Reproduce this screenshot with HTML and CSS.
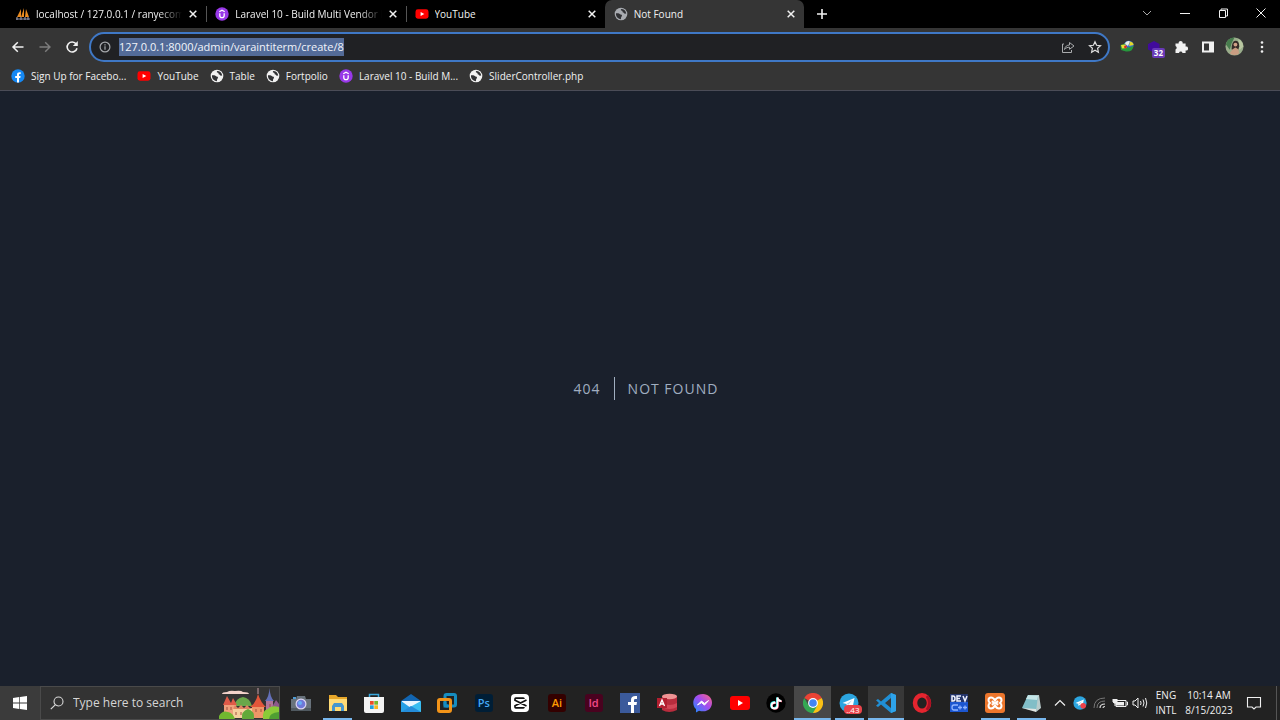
FILE: index.html
```html
<!DOCTYPE html>
<html lang="en">
<head>
<meta charset="utf-8">
<meta name="viewport" content="width=device-width, initial-scale=1">
<title>Not Found</title>
<link rel="stylesheet" href="styles.css">
</head>
<body>
<svg class="sprite" aria-hidden="true">
  <symbol id="close" viewBox="0 0 10 10"><path d="M1.7 1.7l6.6 6.6M8.300 1.7L1.700 8.300" fill="none" stroke="currentColor" stroke-width="1.5"/></symbol>
  <symbol id="globe" viewBox="0 0 14 14"><circle cx="7" cy="7" r="6.300" fill="currentColor"/><path d="M2 6.300c1.500-.2 3.200-.3 3.800.8.500 1 1.900.2 2.200 1.300.2.900-.9 1-.9 2l-.2 1.800C3.800 12 1.700 9.500 2 6.300zM7.200 2c-.9 1.200-.2 1.700.8 1.700.8.1.2 1.600 1.200 1.700 1.100 0 .8 1.200 1.500 1.400l1.500-.2C12 4 10 2 7.200 2z" fill="#303134"/></symbol>
  <symbol id="yt" viewBox="0 0 14 14"><rect x=".5" y="2.300" width="13" height="9.400" rx="2.400" fill="#f00"/><path d="M5.600 5l3.700 2-3.700 2z" fill="#fff"/></symbol>
  <symbol id="udemy" viewBox="0 0 14 14"><circle cx="7" cy="7" r="6.700" fill="#9838e8"/><path d="M4.800 6.200v2.300c0 2.900 4.400 2.900 4.400 0V6.200M4.300 4.700L7 3.200l2.700 1.500" fill="none" stroke="#fff" stroke-width="1.300"/></symbol>
  <symbol id="plane" viewBox="0 0 20 20"><circle cx="10" cy="10" r="9.500" fill="#2ca5df"/><path d="M3.500 10l12-5-2 10-3.600-2.600-2 2-.4-3.300z" fill="#fff"/><path d="M7.500 11.100l5.500-3.800-3.500 4.500" fill="#a9d5ed"/></symbol>
</svg>

<header class="browser">
  <div class="tabstrip">
    <div class="tabs">
      <div class="tab"><svg class="fav" viewBox="0 0 14 14"><path d="M1 10L5 2v8zM5 10l3-9v9zM9 10l1-8 3 8z" fill="#e98b20"/><path d="M0 12h14M1 10v3M5 10v3M9 10v3M12 10v3" stroke="#8d8fa5" stroke-width="1.200"/></svg><span class="tab-title fade">localhost / 127.0.0.1 / ranyecome</span><button class="close" aria-label="Close tab"><svg><use href="#close"/></svg></button></div>
      <div class="tab divided"><svg class="fav"><use href="#udemy"/></svg><span class="tab-title fade">Laravel 10 - Build Multi Vendor E</span><button class="close" aria-label="Close tab"><svg><use href="#close"/></svg></button></div>
      <div class="tab divided"><svg class="fav"><use href="#yt"/></svg><span class="tab-title">YouTube</span><button class="close" aria-label="Close tab"><svg><use href="#close"/></svg></button></div>
      <div class="tab active"><svg class="fav dim"><use href="#globe"/></svg><span class="tab-title">Not Found</span><button class="close" aria-label="Close tab"><svg><use href="#close"/></svg></button></div>
    </div>
    <button class="new-tab" aria-label="New tab"><svg viewBox="0 0 12 12"><path d="M6 1v10M1 6h10" stroke="currentColor" stroke-width="1.600"/></svg></button>
    <div class="window-controls">
      <button aria-label="Search tabs" class="faint"><svg viewBox="0 0 12 12"><path d="M2 4l4 4 4-4" fill="none" stroke="currentColor"/></svg></button>
      <button aria-label="Minimize"><svg viewBox="0 0 12 12"><path d="M1 6.500h10" stroke="currentColor"/></svg></button>
      <button aria-label="Restore"><svg viewBox="0 0 12 12"><path d="M2.500 3.500h6v7h-6zM4 3.500v-1.500h6.500v7h-2" fill="none" stroke="currentColor"/></svg></button>
      <button aria-label="Close window"><svg viewBox="0 0 12 12"><path d="M1.500 1.500l9 9M10.500 1.500l-9 9" stroke="currentColor"/></svg></button>
    </div>
  </div>

  <div class="toolbar">
    <nav class="nav">
      <button aria-label="Back"><svg viewBox="0 0 14 14"><path d="M12.500 7H2M6.800 2.200L2 7l4.800 4.800" fill="none" stroke="currentColor" stroke-width="1.500"/></svg></button>
      <button aria-label="Forward" class="disabled"><svg viewBox="0 0 14 14"><path d="M1.500 7H12M7.200 2.200L12 7l-4.800 4.800" fill="none" stroke="currentColor" stroke-width="1.400"/></svg></button>
      <button aria-label="Reload"><svg viewBox="0 0 14 14"><path d="M11.200 4A5 5 0 1 0 12 8.200" fill="none" stroke="currentColor" stroke-width="1.600"/><path d="M12.800 1v5H7.800z" fill="currentColor"/></svg></button>
    </nav>
    <div class="omnibox">
      <svg class="info" viewBox="0 0 12 12"><circle cx="6" cy="6" r="4.900" fill="none" stroke="currentColor" stroke-width="1.200"/><path d="M6 5.300v3.400M6 3.200v1.200" stroke="currentColor" stroke-width="1.200"/></svg>
      <span class="url" role="textbox" aria-label="Address"><mark>127.0.0.1:8000/admin/varaintiterm/create/8</mark></span>
      <button aria-label="Share"><svg viewBox="0 0 14 14"><path d="M3 4H1.500v8.500h9V10M3.500 9.500C4 6.500 6 5 8.500 5V2.500L13 6 8.500 9.300V7.200C6.500 7.200 5 7.800 3.500 9.500z" fill="none" stroke="currentColor"/></svg></button>
      <button aria-label="Bookmark" class="star"><svg viewBox="0 0 14 14"><path d="M7 1.700l1.600 3.600 3.900.4-2.900 2.600.8 3.900L7 10.200l-3.400 2 .8-3.900-2.900-2.600 3.900-.4z" fill="none" stroke="currentColor" stroke-width="1.200"/></svg></button>
    </div>
    <div class="extensions">
      <button aria-label="Download manager"><svg viewBox="0 0 14 14"><ellipse cx="8.800" cy="5" rx="4.800" ry="4.300" fill="#3a6bd0"/><path d="M4.500 3.500Q8 0 10 1.500L8 6z" fill="#e9f0e8"/><path d="M10 1.500q3.500.5 3.600 3.500L9 6z" fill="#e1d72c"/><path d="M.5 5l5-1.500-1 2.500 4 1.500L13.500 6Q13 12 6 11.500L1 10z" fill="#27983d"/><path d="M1 5l4.500-.5L7 8 2 8.500z" fill="#e8dc35"/><circle cx="5.500" cy="7" r="1.400" fill="#d3282c"/></svg></button>
      <button aria-label="Extension, 32" class="badged"><svg viewBox="0 0 14 14"><path d="M7 1l5.500 3v5.500L7 12.500 1 9.500V4z" fill="#410b9c"/></svg><span class="badge">32</span></button>
      <button aria-label="Extensions"><svg viewBox="0 0 14 14"><path d="M1.500 3.500h3.200a2 2 0 1 1 3.900 0h3v3.100a2 2 0 1 1 0 3.900V13H8.500a1.800 1.800 0 0 0-3.500 0H1.500V9.500a1.800 1.800 0 0 0 0-3.400z" fill="currentColor"/></svg></button>
      <button aria-label="Side panel"><svg viewBox="0 0 14 14"><path d="M1 1.500h12v11H1zM3 3.500v7h5v-7z" fill="currentColor" fill-rule="evenodd"/></svg></button>
      <button aria-label="Profile" class="profile"><svg viewBox="0 0 20 20"><circle cx="10" cy="10" r="9.500" fill="#9aad8b"/><path d="M1 8Q2 1 10 .5l-3 6-2 7z" fill="#477c4d"/><path d="M14 2q5 3 5.300 8L15 14z" fill="#b9c7a1"/><path d="M7 13Q7 4 11 4t4 6l-2 6z" fill="#362c28"/><circle cx="11" cy="8" r="2" fill="#d0a087"/><path d="M5 17l3-4 3-2 3 2 1 4q-5 4-10 0z" fill="#c99d82"/></svg></button>
      <button aria-label="Menu"><svg viewBox="0 0 14 14"><g fill="currentColor"><circle cx="7" cy="2.500" r="1.300"/><circle cx="7" cy="7" r="1.300"/><circle cx="7" cy="11.500" r="1.300"/></g></svg></button>
    </div>
  </div>

  <nav class="bookmarks" aria-label="Bookmarks">
    <a href="#"><svg class="fav" viewBox="0 0 14 14"><circle cx="7" cy="7" r="6.700" fill="#1588f3"/><path d="M6 13.500V9H4.200V7H6V5.500C6 3.600 7.300 2.900 9.700 3.200v1.700c-1.300-.1-1.700.2-1.700.9V7h1.600l-.3 2H8v4.500z" fill="#fff"/></svg>Sign Up for Facebo...</a>
    <a href="#"><svg class="fav"><use href="#yt"/></svg>YouTube</a>
    <a href="#"><svg class="fav"><use href="#globe"/></svg>Table</a>
    <a href="#"><svg class="fav"><use href="#globe"/></svg>Fortpolio</a>
    <a href="#"><svg class="fav"><use href="#udemy"/></svg>Laravel 10 - Build M...</a>
    <a href="#"><svg class="fav"><use href="#globe"/></svg>SliderController.php</a>
  </nav>
</header>

<main class="page">
  <div class="error"><div class="code">404</div><div class="message">NOT FOUND</div></div>
</main>

<footer class="taskbar">
  <button class="start" aria-label="Start"><svg viewBox="0 0 14 14"><path d="M0 2l6.300-.9v5.500H0zM7 1l7-1v6.600H7zM0 7.400h6.300v5.500L0 12zM7 7.400h7V14l-7-1z" fill="#fff"/></svg></button>
  <div class="search">
    <svg class="lens" viewBox="0 0 14 14"><circle cx="8.500" cy="5.500" r="4.500" fill="none" stroke="#d8d8d8" stroke-width="1.100"/><path d="M5.200 8.800L.8 13.200" stroke="#d8d8d8" stroke-width="1.200"/></svg>
    <input type="text" placeholder="Type here to search" aria-label="Type here to search">
    <svg class="castle" viewBox="0 0 60 32">
      <path d="M3 7q0-2 5-2 3-2 8-1 6-1 8 1 6 0 6 2z" fill="#f2d2ca"/>
      <path d="M15 19q2-8 9-9 7 1 9 9z" fill="#6aa84a"/>
      <path d="M5 17h12v12H5z" fill="#f0a07c"/><path d="M4 18L8 9l4 7 2-5 4 7z" fill="#df5a48"/>
      <path d="M14 21h20v10H14z" fill="#f6cf9d"/><path d="M14 22l2-4 3 3 3-3 3 3 3-3 3 3 3 1z" fill="#e08462"/>
      <path d="M47 13h7v17h-7z" fill="#b0759a"/><path d="M46 14q4-4 4.500-13Q51 10 55 14z" fill="#6470b8"/><path d="M54 19h6v12h-6z" fill="#c5708a"/><path d="M53 20l4-7 3 4v3z" fill="#8d5a8c"/>
      <path d="M33 19h12v12H33z" fill="#ee9668"/><path d="M31 20q6-4 8-13 3 9 8 13z" fill="#e2563a"/><path d="M39 7V1" stroke="#c9a0aa"/>
      <path d="M8 20v3M12 20v3M17 25v3M22 25v3M28 25v3M37 22v3M42 22v3M51 17v3" stroke="#a0503f"/>
      <path d="M0 32v-3q3-6 9-4 5 1 7 7z" fill="#71b830"/><path d="M23 32q-1-8 6-10 7 2 6 10z" fill="#62a93a"/><path d="M44 32q-1-9 5-10 3-4 11-2v12z" fill="#8acb38"/><path d="M50 32q0-6 10-7v7z" fill="#4f9f32"/>
    </svg>
  </div>
  <div class="apps">
    <button aria-label="Camera"><svg viewBox="0 0 20 20"><path d="M6 3h8l1 3h5v12H0V6h5z" fill="#68727b"/><path d="M2 4h3v2H2z" fill="#4f9bd3"/><path d="M0 15h20v3H0z" fill="#505960"/><circle cx="10" cy="11" r="5.500" fill="#ddd7f1"/><circle cx="10" cy="11" r="4.300" fill="#7078d8"/><circle cx="9" cy="10" r="2" fill="#66aff5"/></svg></button>
    <button aria-label="File Explorer" class="running"><svg viewBox="0 0 20 20"><path d="M1 2h7l2 2h9v14H1z" fill="#e7a72a"/><path d="M1 6h18v12H1z" fill="#ffdb76"/><path d="M4 18v-5l2-3h8l2 3v5h-3v-4H7v4z" fill="#4596cf"/></svg></button>
    <button aria-label="Store"><svg viewBox="0 0 20 20"><path d="M5.500 5V1.500h9V5" fill="none" stroke="#39a7dc" stroke-width="1.500"/><path d="M0 4h20v14q0 2-2 2H2q-2 0-2-2z" fill="#f3f3f3"/><path d="M6 8h3.700v3.700H6z" fill="#eb4d29"/><path d="M10.300 8H14v3.700h-3.700z" fill="#76b82b"/><path d="M6 12.300h3.700V16H6z" fill="#239fdb"/><path d="M10.300 12.300H14V16h-3.700z" fill="#f9b61e"/></svg></button>
    <button aria-label="Mail"><svg viewBox="0 0 20 20"><path d="M0 8l10-7 10 7v11H0z" fill="#1265b0"/><path d="M1 8h18v4l-9 5-9-5z" fill="#e8f5ff"/><path d="M0 8l10 7L0 19z" fill="#25a0e6"/><path d="M20 8v11H0z" fill="#39bdf0"/><path d="M0 19l10-6 10 6z" fill="#248cd9"/></svg></button>
    <button aria-label="VMware"><svg viewBox="0 0 20 20"><rect x="8" y="1.500" width="10.500" height="11.500" rx="1.500" fill="none" stroke="#168dc0" stroke-width="3"/><rect x="1.500" y="6.500" width="12" height="12" rx="1.500" fill="none" stroke="#f39418" stroke-width="3"/><path d="M8 9v4h3" fill="none" stroke="#168dc0" stroke-width="3"/></svg></button>
    <button aria-label="Photoshop"><span class="tile ps">Ps</span></button>
    <button aria-label="CapCut"><svg viewBox="0 0 20 20"><rect x="1" y="1" width="18" height="18" rx="4" fill="#fff"/><path d="M16.500 7L5 12.800V14q0 .8.800.800h7.400q.8 0 .8-.8M16.500 13L5 7.200V6q0-.8.800-.8h7.400q.8 0 .8.800" fill="none" stroke="#111" stroke-width="1.700"/></svg></button>
    <button aria-label="Illustrator"><span class="tile ai">Ai</span></button>
    <button aria-label="InDesign"><span class="tile id">Id</span></button>
    <button aria-label="Facebook"><svg viewBox="0 0 20 20"><path d="M0 0h20v20H0z" fill="#3b5a9b"/><path d="M11 20v-8H8V9h3V7c0-3.200 2-4.400 6-4v3c-2.300-.2-3 .1-3 1.500V9h3l-.5 3H14v8z" fill="#fff"/></svg></button>
    <button aria-label="Access"><svg viewBox="0 0 20 20"><path d="M5 3v14q7 4 15 0V3z" fill="#b92c3d"/><ellipse cx="12.500" cy="3.500" rx="7.500" ry="2.700" fill="#ef9394"/><path d="M5 10q8 4 15 0v4q-7 4-15 0z" fill="#d34757"/><path d="M0 5h10v10H0z" fill="#b21f30"/><path d="M2.500 13L5 7l2.500 6M3.500 11h3" stroke="#fff" stroke-width="1.300" fill="none"/></svg></button>
    <button aria-label="Messenger"><svg viewBox="0 0 20 20"><defs><linearGradient id="mg" x1="0" y1="1" x2="1" y2="0"><stop stop-color="#168eff"/><stop offset=".55" stop-color="#a64bf0"/><stop offset="1" stop-color="#ff6679"/></linearGradient></defs><path d="M10 1C-2 1-1 14 3 16v3.500l3-1.700C15 20 19 15 19 9.500 19 5 15 1 10 1z" fill="url(#mg)"/><path d="M4.500 12l4-4 3 2.400 4-2.800-4 4.500-3-2.400z" fill="#fff" stroke="#fff"/></svg></button>
    <button aria-label="YouTube"><svg viewBox="0 0 20 20"><rect y="3" width="20" height="14" rx="3" fill="#f00"/><path d="M8 7l5 3-5 3z" fill="#fff"/></svg></button>
    <button aria-label="TikTok"><svg viewBox="0 0 20 20"><circle cx="10" cy="10" r="9.700" fill="#000"/><path d="M9 9q-4 0-4 3.200T8 15q3 0 3-3V4.500q.5 3.500 4 3.500" fill="none" stroke="#25e0dc" stroke-width="2"/><path d="M10 10q-4 0-4 3t3 3 3-3V5q.7 3.500 4 3.500" fill="none" stroke="#f33b65" stroke-width="1.500"/><path d="M9.500 9.500q-4 0-4 3t3 3 3-3V4.500q.5 3.500 4 3.500" fill="none" stroke="#fff" stroke-width="1.800"/></svg></button>
    <button aria-label="Chrome" class="running focused"><svg viewBox="0 0 20 20"><path d="M10 10L1.300 5A10 10 0 0 1 18.700 5z" fill="#ea4335"/><path d="M10 10h-.5L18.700 5A10 10 0 0 1 10 20z" fill="#fbc116"/><path d="M1.300 5A10 10 0 0 0 10 20l4.300-7.500H5.700z" fill="#34a853"/><circle cx="10" cy="10" r="4.900" fill="#fff"/><circle cx="10" cy="10" r="3.800" fill="#4285f4"/></svg></button>
    <button aria-label="Telegram" class="running badged"><svg><use href="#plane"/></svg><span class="badge alert">..43</span></button>
    <button aria-label="Visual Studio Code" class="running active-app"><svg viewBox="0 0 20 20"><path d="M15 0l5 2v16l-5 2L5 11.500 2 14l-2-1.200L3 10 0 7.200 2 6l3 2.500zm0 5l-6 5 6 5z" fill="#208fd5"/><path d="M15 0l5 2v16l-5 2z" fill="#2ea3ea"/></svg></button>
    <button aria-label="Opera"><svg viewBox="0 0 20 20"><ellipse cx="10" cy="10" rx="7" ry="7.700" fill="none" stroke="#e5252f" stroke-width="4.500"/><path d="M15 3q5 7 0 14" fill="none" stroke="#a80f23" stroke-width="3"/></svg></button>
    <button aria-label="Dev-C++"><svg viewBox="0 0 20 20"><path d="M1 1h18v18H1z" fill="#1c56d0"/><path d="M1 1h18v8H1z" fill="#25356a"/><path d="M3 3v5h1q2 0 2-2.500T4 3zM12 3H8v5h4M8 5.500h3M14 3l2 5 2-5" fill="none" stroke="#eef2ff" stroke-width="1.500"/><path d="M9 12H5q-2 0-2 2.500T5 17h4M9 14.500h4M11 12.500v4M14 14.500h4M16 12.500v4" fill="none" stroke="#8fb4ff" stroke-width="1.300"/></svg></button>
    <button aria-label="XAMPP" class="running"><svg viewBox="0 0 20 20"><rect width="20" height="20" rx="3" fill="#ed762c"/><path d="M5 10q-1.500-1-1.500-2.800Q3.500 4.500 6 4.500t4 3q1.500-3 4-3t2.500 2.700Q16.500 9 15 10q1.500 1 1.500 2.800 0 2.700-2.500 2.700t-4-3q-1.500 3-4 3t-2.500-2.700Q3.500 11 5 10zM7 8l2 2-2 2M13 8l-2 2 2 2" fill="none" stroke="#fff" stroke-width="2"/></svg></button>
    <button aria-label="Notepad" class="running"><svg viewBox="0 0 20 20"><path d="M7 2h10l2 13-5 4z" fill="#b9cbcb"/><path d="M6 2l10 1-2 15-14-3z" fill="#82bec7"/><path d="M6 2l10 1-1 4-11-1z" fill="#c4e5e7"/><path d="M0 15l14 1v3z" fill="#e1e5e2"/></svg></button>
  </div>
  <div class="tray">
    <button aria-label="Show hidden icons"><svg viewBox="0 0 16 16"><path d="M3 10.500l5-5 5 5" fill="none" stroke="currentColor" stroke-width="1.200"/></svg></button>
    <button aria-label="Telegram"><svg viewBox="0 0 20 20"><use href="#plane"/><circle cx="14.500" cy="14" r="4" fill="#ef4148"/></svg></button>
    <button aria-label="Wi-Fi"><svg viewBox="0 0 16 16"><g fill="none" stroke="#777"><path d="M2 13Q2 3 13 3M5 13Q5 6 13 6"/></g><path d="M8 13q0-4 5-4M11 13q0-1.500 2-1.500" fill="none" stroke="#ddd" stroke-width="1.200"/></svg></button>
    <button aria-label="Battery"><svg viewBox="0 0 16 16"><path d="M4 5.500h10v6H4zM14.500 7h1v3h-1" fill="none" stroke="#eee"/><path d="M4 7h8v3.500H4z" fill="#eee"/><path d="M1 4v3q2 3 4 0V4M3 9v2" fill="#eee" stroke="#eee"/></svg></button>
    <button aria-label="Volume"><svg viewBox="0 0 16 16"><path d="M1 6h2l3-3v10l-3-3H1zM8.500 6q1.200 2 0 4M11 4.500q2 3.500 0 7M13.500 3q2.500 5 0 10" fill="none" stroke="currentColor"/></svg></button>
    <div class="lang"><span>ENG</span><span>INTL</span></div>
    <div class="clock"><time>10:14 AM</time><time>8/15/2023</time></div>
    <button class="notify" aria-label="Notifications"><svg viewBox="0 0 16 16"><path d="M1.500 2.500h13v9.500H10l-2 2-2-2H1.500z" fill="none" stroke="currentColor" stroke-width="1.100"/></svg></button>
  </div>
</footer>
</body>
</html>
```
FILE: styles.css
```css
* { box-sizing: border-box; }
body {
  margin: 0;
  min-height: 100vh;
  display: flex;
  flex-direction: column;
  background: #1a202c;
  color: #f1f1f1;
  font: 10px/16px "Open Sans", "Noto Sans", sans-serif;
}
button {
  display: flex;
  align-items: center;
  justify-content: center;
  padding: 0;
  border: 0;
  background: none;
  color: inherit;
  font: inherit;
}
svg { display: block; flex: none; }
.sprite { display: none; }
.fav { width: 14px; height: 14px; }
.dim { color: #a8abb0; }

.browser { background: #353535; border-bottom: 1px solid #4b4c57; }
.tabstrip { display: flex; height: 28px; padding-left: 7px; background: #000; }
.tabs { display: flex; flex: 0 1 797px; min-width: 0; }
.tab {
  display: flex;
  flex: 1;
  min-width: 0;
  align-items: center;
  gap: 6px;
  padding: 0 8px 0 9px;
}
.divided { background: linear-gradient(#555, #555) left center / 1px 16px no-repeat; }
.active { background: #353535; border-radius: 7px 7px 0 0; }
.tab-title { flex: 1; min-width: 0; overflow: hidden; white-space: nowrap; }
.fade { mask-image: linear-gradient(to right, #000 84%, transparent); }
.close svg { width: 10px; height: 10px; }
.new-tab { width: 36px; }
.new-tab svg { width: 12px; height: 12px; }
.window-controls { display: flex; margin-left: auto; padding-bottom: 3px; }
.window-controls button { width: 38px; }
.window-controls svg { width: 12px; height: 12px; }
.faint { color: #aaa; }

.toolbar { display: flex; height: 37px; align-items: center; }
.nav { display: flex; padding: 0 4px; }
.nav button { width: 27px; height: 28px; }
.nav svg { width: 14px; height: 14px; }
.disabled { color: #7d7d7d; }
.omnibox {
  display: flex;
  flex: 1;
  height: 30px;
  min-width: 0;
  align-items: center;
  padding: 0 0 0 8px;
  border: 2px solid #3f78c6;
  border-radius: 15px;
  background: #202124;
}
.info { width: 12px; height: 12px; margin-right: 8px; color: #a5a8ac; }
.url { flex: 1; min-width: 0; overflow: hidden; white-space: nowrap; font-size: 11px; }
.url mark { display: inline-block; height: 18px; line-height: 18px; background: #536b98; color: #f1f4fa; }
.omnibox button { width: 27px; color: #a9abad; }
.omnibox .star { color: #ddd; }
.omnibox button svg { width: 14px; height: 14px; }
.extensions { display: flex; padding: 0 5px 0 3px; }
.extensions button { width: 27px; height: 28px; }
.extensions svg { width: 14px; height: 14px; }
.extensions .profile svg { width: 19px; height: 19px; }
.badged { position: relative; }
.badge {
  position: absolute;
  right: 2px;
  bottom: 3px;
  padding: 0 2px;
  border-radius: 2px;
  background: #6839b7;
  color: #fff;
  font-size: 8px;
  font-weight: 700;
  line-height: 10px;
}

.bookmarks { display: flex; height: 25px; align-items: center; gap: 11px; padding: 0 11px 4px; }
.bookmarks a { display: flex; gap: 6px; align-items: center; color: inherit; text-decoration: none; white-space: nowrap; }

.page { display: flex; flex: 1; align-items: center; justify-content: center; }
.error {
  display: flex;
  align-items: center;
  padding-left: 12px;
  color: #a0aec0;
  font-size: 14px;
  line-height: 23px;
  letter-spacing: 1px;
}
.code { padding: 0 13px; border-right: 1px solid #a0aec0; }
.message { padding: 0 13px; }

.taskbar { display: flex; height: 34px; background: #222; }
.start { width: 40px; background: #3b3b3b; }
.start svg { width: 14px; height: 14px; }
.search {
  display: flex;
  width: 240px;
  align-items: center;
  border: 1px solid #4a4a4a;
  background: #333;
}
.lens { width: 14px; height: 14px; margin: 0 9px; }
.search input {
  flex: 1;
  min-width: 0;
  padding: 0;
  border: 0;
  outline: 0;
  background: none;
  color: #d5d5d5;
  font: 12px/20px "Open Sans", "Noto Sans", sans-serif;
}
.search input::placeholder { color: #d5d5d5; opacity: 1; }
.castle { width: 60px; height: 32px; }
.apps { display: flex; flex: 1; min-width: 0; padding-left: 3px; }
.apps button { flex: 1; min-width: 0; }
.apps svg { width: 20px; height: 20px; }
.running { background: linear-gradient(#78b7ed, #78b7ed) center bottom / 29px 2px no-repeat; }
.focused { background-color: #484848; background-size: 100% 2px; }
.active-app { background-color: #383838; background-size: 100% 2px; }
.tile { width: 18px; height: 18px; border-radius: 3px; font-size: 11px; font-weight: 600; line-height: 17px; }
.ps { background: #001e36; color: #45a8f5; }
.ai { background: #330000; color: #ff9a00; }
.id { background: #49021f; color: #f2498a; }
.badge.alert { background: #e9444b; right: 6px; bottom: 6px; border-radius: 4px; font-weight: 400; line-height: 9px; }
.tray { display: flex; align-items: stretch; margin-right: 3px; padding-right: 4px; border-right: 1px solid #555; color: #f0f0f0; }
.tray button { width: 20px; }
.tray svg { width: 16px; height: 16px; }
.tray button:nth-child(2) svg { width: 14px; height: 14px; }
.lang, .clock { display: flex; flex-direction: column; align-items: center; justify-content: center; line-height: 15px; }
.lang { width: 32px; }
.clock { width: 54px; }
.tray .notify { width: 36px; }
```
